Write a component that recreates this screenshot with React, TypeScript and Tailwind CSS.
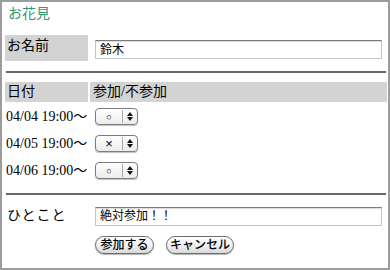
import React from "react";

const serif = "font-['Liberation_Serif','Noto_Sans_CJK_JP',serif]";
const sans = "font-['Liberation_Sans','Noto_Sans_CJK_JP',sans-serif]";

function TextBox({ value }: { value: string }) {
  return (
    <div
      className={`w-[287px] h-[19px] border border-[#c4c4c4] border-t-[#7a7a7a] shadow-[inset_0_1px_1px_rgba(0,0,0,0.15)] bg-white flex items-center pl-[4px] text-[12px] leading-[14px] text-black ${sans}`}
    >
      {value}
    </div>
  );
}

function PopUp({ value }: { value: "○" | "×" }) {
  return (
    <div className="w-[43px] h-[17px] rounded-[4px] border border-[#7c7c7c] bg-gradient-to-b from-white to-[#ececec] shadow-[0_1px_1px_rgba(0,0,0,0.25)] flex items-stretch">
      <div
        className={`w-[26px] flex items-center justify-center text-black ${sans} ${
          value === "○" ? "text-[9px] leading-[10px]" : "text-[13px] leading-[14px]"
        }`}
      >
        {value}
      </div>
      <div className="w-px bg-[#a8a8a8] my-[1px]" />
      <div className="flex-1 flex flex-col items-center justify-center gap-[1px]">
        <svg width="6" height="4" viewBox="0 0 6 4">
          <polygon points="3,0 6,4 0,4" fill="#111" />
        </svg>
        <svg width="6" height="4" viewBox="0 0 6 4">
          <polygon points="0,0 6,0 3,4" fill="#111" />
        </svg>
      </div>
    </div>
  );
}

function Pill({ label, w }: { label: string; w: string }) {
  return (
    <div
      className={`${w} h-[18px] rounded-full border border-[#6e6e6e] bg-gradient-to-b from-white via-[#f2f2f2] to-[#d9d9d9] shadow-[0_1px_1px_rgba(0,0,0,0.3)] flex items-center justify-center text-[12px] leading-[14px] font-medium text-black ${sans}`}
    >
      {label}
    </div>
  );
}

export default function App() {
  const rows: { date: string; v: "○" | "×" }[] = [
    { date: "04/04 19:00〜", v: "○" },
    { date: "04/05 19:00〜", v: "×" },
    { date: "04/06 19:00〜", v: "○" },
  ];
  return (
    <div
      className={`w-[390px] h-[270px] border-2 border-[#9c9c9c] bg-white text-[14px] leading-[16px] text-black ${serif}`}
    >
      <div className="pt-[4px] pl-[6px] text-[#339977]">お花見</div>

      <div className="mt-[13px] ml-[3px] flex gap-[2px]">
        <div className="w-[83px] h-[26px] bg-[#d3d3d3] pl-[2px] pt-[3px]">お名前</div>
        <div className="pl-[5px] pt-[5px]">
          <TextBox value="鈴木" />
        </div>
      </div>

      <div className="mt-[10px] ml-[4px] mr-[2px] h-[2px] bg-[#666]" />

      <div className="mt-[9px] ml-[3px] mr-[1px] flex gap-[2px]">
        <div className="w-[83px] h-[20px] bg-[#d3d3d3] pl-[2px] flex items-center">日付</div>
        <div className="flex-1 h-[20px] bg-[#d3d3d3] pl-[3px] flex items-center">参加/不参加</div>
      </div>

      <div className="mt-[2px] ml-[3px] flex flex-col gap-[2px]">
        {rows.map((r) => (
          <div key={r.date} className="flex gap-[2px] h-[25px] items-center">
            <div className="w-[83px] pl-[1px] whitespace-nowrap">{r.date}</div>
            <div className="pl-[5px]">
              <PopUp value={r.v} />
            </div>
          </div>
        ))}
      </div>

      <div className="mt-[10px] ml-[4px] mr-[2px] h-[2px] bg-[#666]" />

      <div className="mt-[8px] ml-[3px] flex gap-[2px]">
        <div className="w-[83px] h-[26px] pl-[2px] flex items-center tracking-[1px]">ひとこと</div>
        <div className="pl-[5px] flex items-center">
          <TextBox value="絶対参加！！" />
        </div>
      </div>

      <div className="mt-[7px] ml-[93px] flex gap-[12px]">
        <Pill label="参加する" w="w-[59px]" />
        <Pill label="キャンセル" w="w-[68px]" />
      </div>
    </div>
  );
}
